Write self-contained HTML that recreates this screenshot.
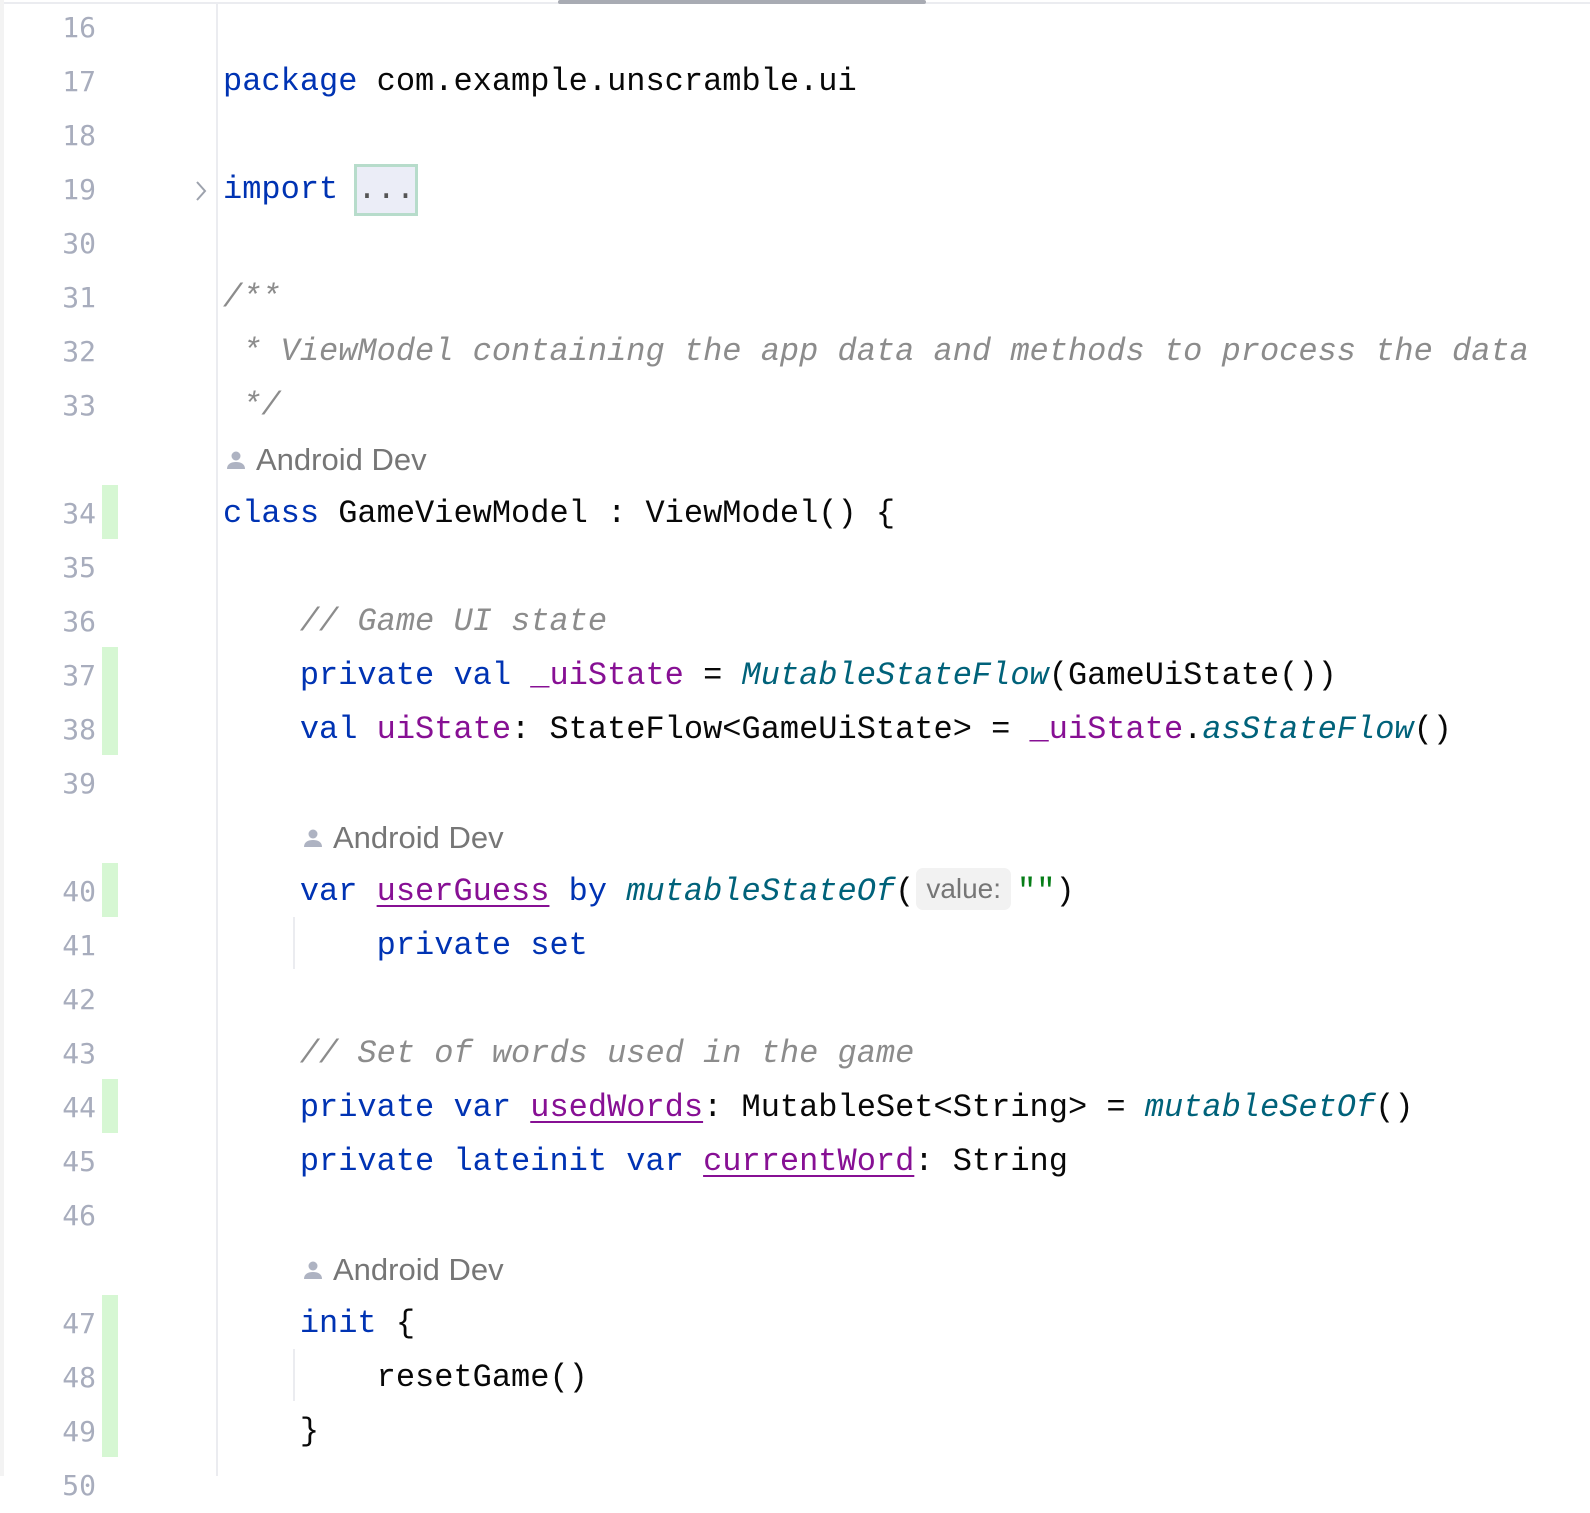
<!DOCTYPE html>
<html><head><meta charset="utf-8"><style>
body{margin:0;width:1590px;height:1476px;background:#fff;position:relative;overflow:hidden;font-family:"Liberation Mono",monospace;}
.r{position:absolute;left:0;height:54px;line-height:54px;white-space:pre;}
.n{position:absolute;left:0;width:96px;text-align:right;color:#a8adbd;font-size:31px;line-height:54px;height:54px;font-family:"DejaVu Sans Mono",monospace;font-size:28px}
.c{position:absolute;left:223px;font-size:32px;color:#080808;}
.k{color:#0033b3}.p{color:#871094}.f{color:#00627a;font-style:italic}.cm{color:#8c8c8c;font-style:italic}.s{color:#067d17}
.u{text-decoration:underline;text-decoration-thickness:2px;text-underline-offset:5px}
.a{position:absolute;left:225px;font-family:"Liberation Sans",sans-serif;font-size:31px;color:#767676;}
.hint{display:inline-block;font-family:"Liberation Sans",sans-serif;font-size:28px;color:#767676;background:#f2f2f2;border-radius:7px;padding:0 10px;line-height:42px;vertical-align:2px;margin:0 6px 0 2px}
.g{position:absolute;left:102px;width:16px;background:#d6f7d3}
.ico{display:inline-block;width:22px;height:22px;vertical-align:-1px;margin-right:9px}
</style></head><body>
<div style="position:absolute;left:0;top:2px;width:1590px;height:2px;background:#ebecf0"></div>
<div style="position:absolute;left:558px;top:0;width:368px;height:4px;background:#a8abb3;border-radius:2px"></div>
<div style="position:absolute;left:0;top:0;width:4px;height:1476px;background:#f3f3f3"></div>
<div style="position:absolute;left:216px;top:4px;width:2px;height:1472px;background:#ebecf0;z-index:2"></div>
<div class="g" style="top:485px;height:54px"></div>
<div class="g" style="top:647px;height:108px"></div>
<div class="g" style="top:863px;height:54px"></div>
<div class="g" style="top:1079px;height:54px"></div>
<div class="g" style="top:1295px;height:162px"></div>
<div style="position:absolute;left:293px;top:917px;width:2px;height:52px;background:#ebecf0"></div>
<div style="position:absolute;left:293px;top:1349px;width:2px;height:52px;background:#ebecf0"></div>

<div class="r" style="top:1px"><span class="n">16</span></div>
<div class="r" style="top:55px"><span class="n">17</span><span class="c"><span class="k">package</span> com.example.unscramble.ui</span></div>
<div class="r" style="top:109px"><span class="n">18</span></div>
<div class="r" style="top:163px"><span class="n">19</span><svg style="position:absolute;left:194px;top:16px" width="14" height="24" viewBox="0 0 14 24"><path d="M3 3l8 9-8 9" fill="none" stroke="#9da2ad" stroke-width="2"/></svg><span class="c"><span class="k">import</span> <span style="display:inline-block;border:3px solid #b7dccb;background:#ebedf7;line-height:46px;height:46px;vertical-align:top;margin-top:1px;margin-left:-3px;color:#555">...</span></span></div>
<div class="r" style="top:217px"><span class="n">30</span></div>
<div class="r" style="top:271px"><span class="n">31</span><span class="c cm">/**</span></div>
<div class="r" style="top:325px"><span class="n">32</span><span class="c cm"> * ViewModel containing the app data and methods to process the data</span></div>
<div class="r" style="top:379px"><span class="n">33</span><span class="c cm"> */</span></div>
<div class="r" style="top:433px"><span class="a"><svg class="ico" viewBox="0 0 22 22"><circle cx="11" cy="7" r="4.5" fill="#aeb3c2"/><path d="M2 20c0-5 4-7 9-7s9 2 9 7z" fill="#aeb3c2"/></svg>Android Dev</span></div>
<div class="r" style="top:487px"><span class="n">34</span><span class="c"><span class="k">class</span> GameViewModel : ViewModel() {</span></div>
<div class="r" style="top:541px"><span class="n">35</span></div>
<div class="r" style="top:595px"><span class="n">36</span><span class="c cm">    // Game UI state</span></div>
<div class="r" style="top:649px"><span class="n">37</span><span class="c">    <span class="k">private val</span> <span class="p">_uiState</span> = <span class="f">MutableStateFlow</span>(GameUiState())</span></div>
<div class="r" style="top:703px"><span class="n">38</span><span class="c">    <span class="k">val</span> <span class="p">uiState</span>: StateFlow&lt;GameUiState&gt; = <span class="p">_uiState</span>.<span class="f">asStateFlow</span>()</span></div>
<div class="r" style="top:757px"><span class="n">39</span></div>
<div class="r" style="top:811px"><span class="a" style="left:302px"><svg class="ico" viewBox="0 0 22 22"><circle cx="11" cy="7" r="4.5" fill="#aeb3c2"/><path d="M2 20c0-5 4-7 9-7s9 2 9 7z" fill="#aeb3c2"/></svg>Android Dev</span></div>
<div class="r" style="top:865px"><span class="n">40</span><span class="c">    <span class="k">var</span> <span class="p u">userGuess</span> <span class="k">by</span> <span class="f">mutableStateOf</span>(<span class="hint">value:</span><span class="s">""</span>)</span></div>
<div class="r" style="top:919px"><span class="n">41</span><span class="c">        <span class="k">private set</span></span></div>
<div class="r" style="top:973px"><span class="n">42</span></div>
<div class="r" style="top:1027px"><span class="n">43</span><span class="c cm">    // Set of words used in the game</span></div>
<div class="r" style="top:1081px"><span class="n">44</span><span class="c">    <span class="k">private var</span> <span class="p u">usedWords</span>: MutableSet&lt;String&gt; = <span class="f">mutableSetOf</span>()</span></div>
<div class="r" style="top:1135px"><span class="n">45</span><span class="c">    <span class="k">private lateinit var</span> <span class="p u">currentWord</span>: String</span></div>
<div class="r" style="top:1189px"><span class="n">46</span></div>
<div class="r" style="top:1243px"><span class="a" style="left:302px"><svg class="ico" viewBox="0 0 22 22"><circle cx="11" cy="7" r="4.5" fill="#aeb3c2"/><path d="M2 20c0-5 4-7 9-7s9 2 9 7z" fill="#aeb3c2"/></svg>Android Dev</span></div>
<div class="r" style="top:1297px"><span class="n">47</span><span class="c">    <span class="k">init</span> {</span></div>
<div class="r" style="top:1351px"><span class="n">48</span><span class="c">        resetGame()</span></div>
<div class="r" style="top:1405px"><span class="n">49</span><span class="c">    }</span></div>
<div class="r" style="top:1459px"><span class="n">50</span></div>
</body></html>
